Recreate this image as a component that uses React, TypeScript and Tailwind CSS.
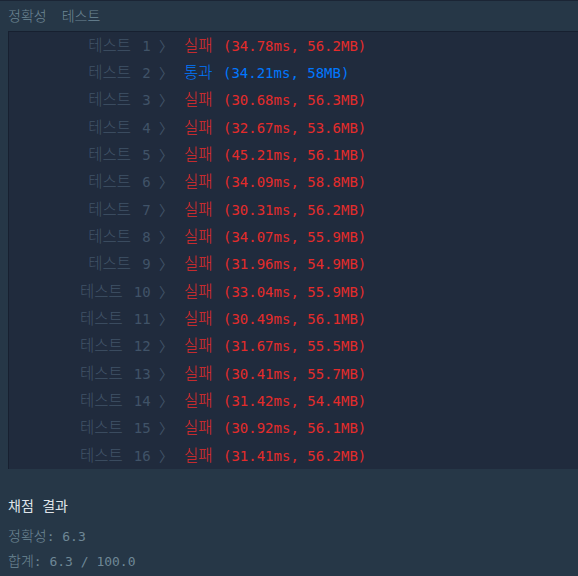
const results = [
  { ok: false, time: "34.78ms", mem: "56.2MB" },
  { ok: true, time: "34.21ms", mem: "58MB" },
  { ok: false, time: "30.68ms", mem: "56.3MB" },
  { ok: false, time: "32.67ms", mem: "53.6MB" },
  { ok: false, time: "45.21ms", mem: "56.1MB" },
  { ok: false, time: "34.09ms", mem: "58.8MB" },
  { ok: false, time: "30.31ms", mem: "56.2MB" },
  { ok: false, time: "34.07ms", mem: "55.9MB" },
  { ok: false, time: "31.96ms", mem: "54.9MB" },
  { ok: false, time: "33.04ms", mem: "55.9MB" },
  { ok: false, time: "30.49ms", mem: "56.1MB" },
  { ok: false, time: "31.67ms", mem: "55.5MB" },
  { ok: false, time: "30.41ms", mem: "55.7MB" },
  { ok: false, time: "31.42ms", mem: "54.4MB" },
  { ok: false, time: "30.92ms", mem: "56.1MB" },
  { ok: false, time: "31.41ms", mem: "56.2MB" },
];

const mono = "font-['DejaVu_Sans_Mono','Noto_Sans_CJK_KR',monospace]";

export default function App() {
  return (
    <div className={`min-h-screen w-full bg-[#263747] ${mono} overflow-hidden`}>
      {/* section title */}
      <div className="h-[31px] border-t border-[#1b2535] flex items-center pl-2 pt-[1px] text-[14px] text-[#6e8796] font-light">
        <span>정확성</span>
        <span className="ml-[15px]">테스트</span>
      </div>

      {/* result table */}
      <div className="ml-2 bg-[#202b3d] border-t border-l border-[#172030]">
        {results.map((r, i) => (
          <div key={i} className="flex items-center h-[27.33px] text-[14px] leading-[20px] whitespace-pre">
            <span className="w-[164px] text-right text-[#405368]">
              <span className="text-[15.5px] font-light">테스트</span>
              <span className="ml-[11px]">{i + 1}</span>
              {" 〉"}
            </span>
            <span className={`ml-[11px] ${r.ok ? "text-[#0078ff]" : "text-[#e42b2b]"}`}>
              <span className="text-[15.5px] font-light mr-[2px]">{r.ok ? "통과" : "실패"}</span>
              {` (${r.time}, ${r.mem})`}
            </span>
          </div>
        ))}
      </div>

      {/* summary */}
      <div className="pl-2 whitespace-pre">
        <div className="mt-[27px] text-[14px] leading-[20px] text-[#dfe4e9]">채점 결과</div>
        <div className="mt-[10px] text-[13px] leading-[20px] text-[#6e8796]">
          <span className="text-[14px] font-light">정확성</span>: 6.3
        </div>
        <div className="mt-[4px] text-[13px] leading-[20px] text-[#6e8796]">
          <span className="text-[14px] font-light">합계</span>: 6.3 / 100.0
        </div>
      </div>
    </div>
  );
}
